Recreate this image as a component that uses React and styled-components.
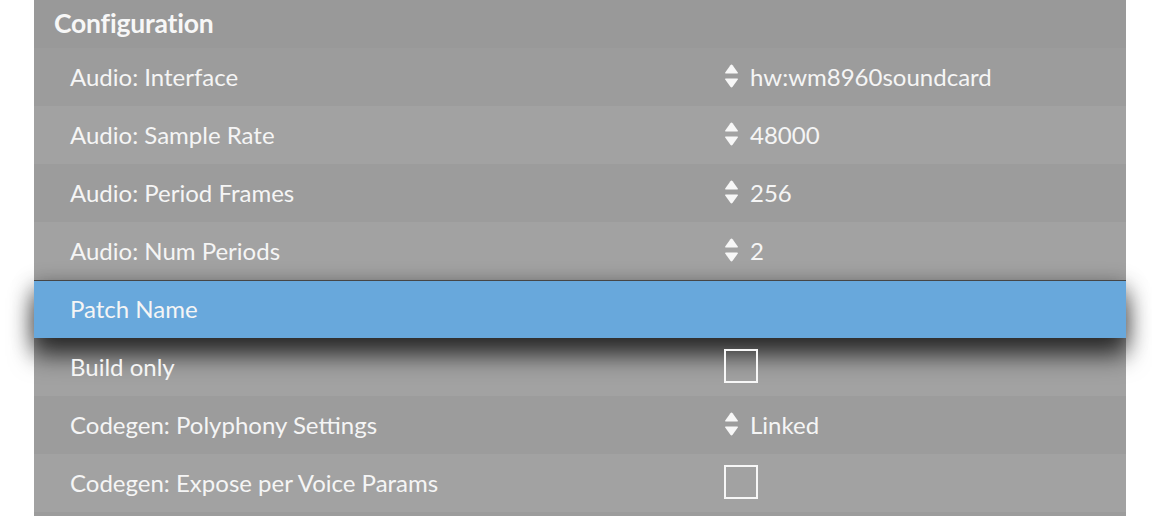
import React from "react";
import styled, { createGlobalStyle } from "styled-components";

const GlobalStyle = createGlobalStyle`
  body {
    margin: 0;
    background: #ffffff;
    font-family: Lato, "Open Sans", sans-serif;
  }
`;

const Page = styled.div`
  padding: 0 26px 0 34px;
  height: 516px;
  overflow: hidden;
`;

const Panel = styled.div`
  background: #a2a2a2;
  display: flex;
  flex-direction: column;
`;

const Header = styled.h2`
  margin: 0;
  height: 48px;
  box-sizing: border-box;
  padding: 0 20px 3px;
  display: flex;
  align-items: center;
  background: #999999;
  color: #f7f7f7;
  font-size: 26.5px;
  font-weight: 700;
  letter-spacing: -0.2px;
`;

const Row = styled.div`
  display: grid;
  grid-template-columns: 690px 1fr;
  align-items: center;
  height: 58px;
  box-sizing: border-box;
  padding-bottom: 2px;
  color: #f5f5f5;
  font-size: 24px;
  background: ${(p) => (p.$odd ? "#9c9c9c" : "#a2a2a2")};
  position: relative;

  ${(p) =>
    p.$selected &&
    `
    background: #68a8dc;
    border-top: 1px solid #464646;
    box-shadow: 0 18px 24px rgba(0, 0, 0, 0.6), 0 6px 22px rgba(0, 0, 0, 0.45);
    z-index: 1;
  `}
`;

const Label = styled.div`
  position: relative;
  z-index: 2;
  padding-left: 36px;
`;

const Value = styled.div`
  position: relative;
  z-index: 2;
  display: flex;
  align-items: center;
  gap: 11px;
`;

const Checkbox = styled.div`
  width: 30px;
  height: 30px;
  border: 2px solid #f7f7f7;
`;

const SortIcon = () => (
  <svg width="15" height="24" viewBox="0 0 15 24" fill="#f7f7f7">
    <path d="M1.2 8.4 L6.4 1.2 Q7.5 0 8.6 1.2 L13.8 8.4 Q14.4 9.4 13.2 9.4 L1.8 9.4 Q0.6 9.4 1.2 8.4 Z" />
    <path d="M1.2 15.6 L6.4 22.8 Q7.5 24 8.6 22.8 L13.8 15.6 Q14.4 14.6 13.2 14.6 L1.8 14.6 Q0.6 14.6 1.2 15.6 Z" />
  </svg>
);

const rows = [
  { label: "Audio: Interface", type: "select", value: "hw:wm8960soundcard" },
  { label: "Audio: Sample Rate", type: "select", value: "48000" },
  { label: "Audio: Period Frames", type: "select", value: "256" },
  { label: "Audio: Num Periods", type: "select", value: "2" },
  { label: "Patch Name", type: "text", value: "", selected: true },
  { label: "Build only", type: "check" },
  { label: "Codegen: Polyphony Settings", type: "select", value: "Linked" },
  { label: "Codegen: Expose per Voice Params", type: "check" },
  { label: "", type: "text", value: "" },
];

export default function App() {
  return (
    <>
      <GlobalStyle />
      <Page>
        <Panel>
          <Header>Configuration</Header>
          {rows.map((r, i) => (
            <Row key={i} $odd={i % 2 === 0} $selected={r.selected}>
              <Label>{r.label}</Label>
              <Value>
                {r.type === "select" && (
                  <>
                    <SortIcon />
                    <span>{r.value}</span>
                  </>
                )}
                {r.type === "check" && <Checkbox />}
              </Value>
            </Row>
          ))}
        </Panel>
      </Page>
    </>
  );
}
